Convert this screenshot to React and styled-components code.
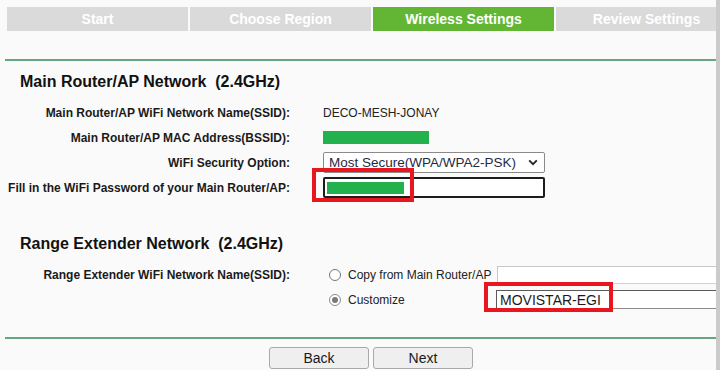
import styled, { createGlobalStyle } from 'styled-components';

const GlobalStyle = createGlobalStyle`
  html, body {
    margin: 0;
    padding: 0;
    background: #fafafa;
    font-family: "Liberation Sans", Arial, sans-serif;
  }
`;

const Page = styled.div`
  display: flex;
  width: 720px;
  height: 370px;
  overflow: hidden;
`;

const Main = styled.div`
  width: 716px;
  padding-top: 7px;
  box-sizing: border-box;
  overflow: hidden;
`;

const ScrollEdge = styled.div`
  width: 4px;
  height: 370px;
  background: #cbcbcb;
`;

const Tabs = styled.div`
  display: flex;
  gap: 2px;
  margin-left: 7px;
`;

const Tab = styled.div`
  flex: 0 0 ${({ w }) => w}px;
  height: 24px;
  display: flex;
  align-items: center;
  justify-content: center;
  background: ${({ active }) => (active ? '#63b634' : '#dadada')};
  color: #fff;
  font-size: 14px;
  font-weight: 700;
`;

const Divider = styled.div`
  height: 2px;
  margin: ${({ top }) => top}px 0 0 5px;
  background: #66a681;
`;

const Section = styled.div`
  padding-top: ${({ top }) => top}px;
`;

const Heading = styled.div`
  margin-left: 20px;
  font-size: 16px;
  line-height: 18px;
  font-weight: 700;
  color: #111;
  white-space: pre;
`;

const Rows = styled.div`
  margin-top: 9px;
`;

const Row = styled.div`
  display: grid;
  grid-template-columns: 290px 1fr;
  column-gap: 33px;
  align-items: center;
  height: 25px;
`;

const Label = styled.div`
  text-align: right;
  font-size: 12px;
  font-weight: 700;
  color: #1a1a1a;
  white-space: nowrap;
`;

const Value = styled.div`
  display: flex;
  align-items: center;
  font-size: 12px;
  color: #222;
  position: relative;
`;

const Mask = styled.div`
  width: ${({ w }) => w}px;
  height: ${({ h }) => h}px;
  background: #22b14c;
`;

const Select = styled.div`
  width: 222px;
  height: 21px;
  box-sizing: border-box;
  border: 1px solid #8a8a8a;
  border-radius: 2px;
  background: #fff;
  display: flex;
  align-items: center;
  justify-content: space-between;
  padding: 0 6px 0 5px;
  font-size: 13.5px;
  color: #1f2a44;
`;

const PasswordBox = styled.div`
  width: 222px;
  height: 21px;
  box-sizing: border-box;
  border: 2px solid #1c1c1c;
  border-radius: 2px;
  background: #fff;
  display: flex;
  align-items: center;
  padding-left: 2px;
`;

const Highlight = styled.div`
  position: absolute;
  left: ${({ x }) => x}px;
  top: ${({ y }) => y}px;
  width: ${({ w }) => w}px;
  height: ${({ h }) => h}px;
  box-sizing: border-box;
  border: 4px solid #e8161f;
  pointer-events: none;
`;

const ExtRow = styled.div`
  display: grid;
  grid-template-columns: 290px 1fr;
  column-gap: 39px;
  align-items: center;
  height: 25px;
`;

const Choice = styled.div`
  display: flex;
  align-items: center;
  position: relative;
`;

const Radio = styled.span`
  width: 12px;
  height: 12px;
  box-sizing: border-box;
  border-radius: 50%;
  border: 1px solid ${({ checked }) => (checked ? '#8a8a8a' : '#767676')};
  background: #fff;
  display: flex;
  align-items: center;
  justify-content: center;
  &::after {
    content: '';
    width: 6px;
    height: 6px;
    border-radius: 50%;
    background: ${({ checked }) => (checked ? '#7a7a7a' : 'transparent')};
  }
`;

const ChoiceText = styled.span`
  margin-left: 7px;
  width: ${({ w }) => w}px;
  font-size: 12px;
  color: #222;
  white-space: nowrap;
`;

const TextField = styled.div`
  flex: 1;
  height: ${({ h }) => h}px;
  box-sizing: border-box;
  background: #fff;
  border: 1px solid ${({ dark }) => (dark ? '#8a8a8a' : '#d3d3d3')};
  border-right: none;
  border-top-color: ${({ dark }) => (dark ? '#5a5a5a' : '#c8c8c8')};
  border-left-color: ${({ dark }) => (dark ? '#5a5a5a' : '#c8c8c8')};
  display: flex;
  align-items: center;
  padding-left: 3px;
  font-size: 14px;
  color: #1a1a1a;
`;

const Footer = styled.div`
  display: flex;
  gap: 4px;
  padding-left: 269px;
  margin-top: 8px;
`;

const Button = styled.button`
  width: 100px;
  height: 22px;
  box-sizing: border-box;
  border: 1px solid #a9a9a9;
  border-radius: 3px;
  background: #efefef;
  font-family: "Liberation Sans", Arial, sans-serif;
  font-size: 14px;
  color: #1a1a1a;
  padding: 0;
`;

const Chevron = () => (
  <svg width="10" height="7" viewBox="0 0 10 7">
    <path d="M1.2 1.4 5 5.2 8.8 1.4" fill="none" stroke="#222" strokeWidth="1.8" />
  </svg>
);

const tabs = [
  { name: 'Start' },
  { name: 'Choose Region' },
  { name: 'Wireless Settings', active: true },
  { name: 'Review Settings' },
];

export default function App() {
  return (
    <Page>
      <GlobalStyle />
      <Main>
        <Tabs>
          {tabs.map((t) => (
            <Tab key={t.name} w={181} active={t.active}>
              {t.name}
            </Tab>
          ))}
        </Tabs>
        <Divider top={28} />

        <Section top={12}>
          <Heading>{'Main Router/AP Network  (2.4GHz)'}</Heading>
          <Rows>
            <Row>
              <Label>Main Router/AP WiFi Network Name(SSID):</Label>
              <Value>DECO-MESH-JONAY</Value>
            </Row>
            <Row>
              <Label>Main Router/AP MAC Address(BSSID):</Label>
              <Value>
                <Mask w={106} h={13} />
              </Value>
            </Row>
            <Row>
              <Label>WiFi Security Option:</Label>
              <Value>
                <Select>
                  <span>Most Secure(WPA/WPA2-PSK)</span>
                  <Chevron />
                </Select>
              </Value>
            </Row>
            <Row>
              <Label>Fill in the WiFi Password of your Main Router/AP:</Label>
              <Value>
                <PasswordBox>
                  <Mask w={77} h={12} />
                </PasswordBox>
                <Highlight x={-11} y={-9} w={102} h={34} />
              </Value>
            </Row>
          </Rows>
        </Section>

        <Section top={35}>
          <Heading>{'Range Extender Network  (2.4GHz)'}</Heading>
          <Rows>
            <ExtRow>
              <Label>Range Extender WiFi Network Name(SSID):</Label>
              <Choice>
                <Radio />
                <ChoiceText w={149}>Copy from Main Router/AP</ChoiceText>
                <TextField h={18} />
              </Choice>
            </ExtRow>
            <ExtRow>
              <span />
              <Choice>
                <Radio checked />
                <ChoiceText w={148}>Customize</ChoiceText>
                <TextField h={19} dark>
                  MOVISTAR-EGI
                </TextField>
                <Highlight x={155} y={-8} w={129} h={30} />
              </Choice>
            </ExtRow>
          </Rows>
        </Section>

        <Divider top={25} />
        <Footer>
          <Button>Back</Button>
          <Button>Next</Button>
        </Footer>
      </Main>
      <ScrollEdge />
    </Page>
  );
}
